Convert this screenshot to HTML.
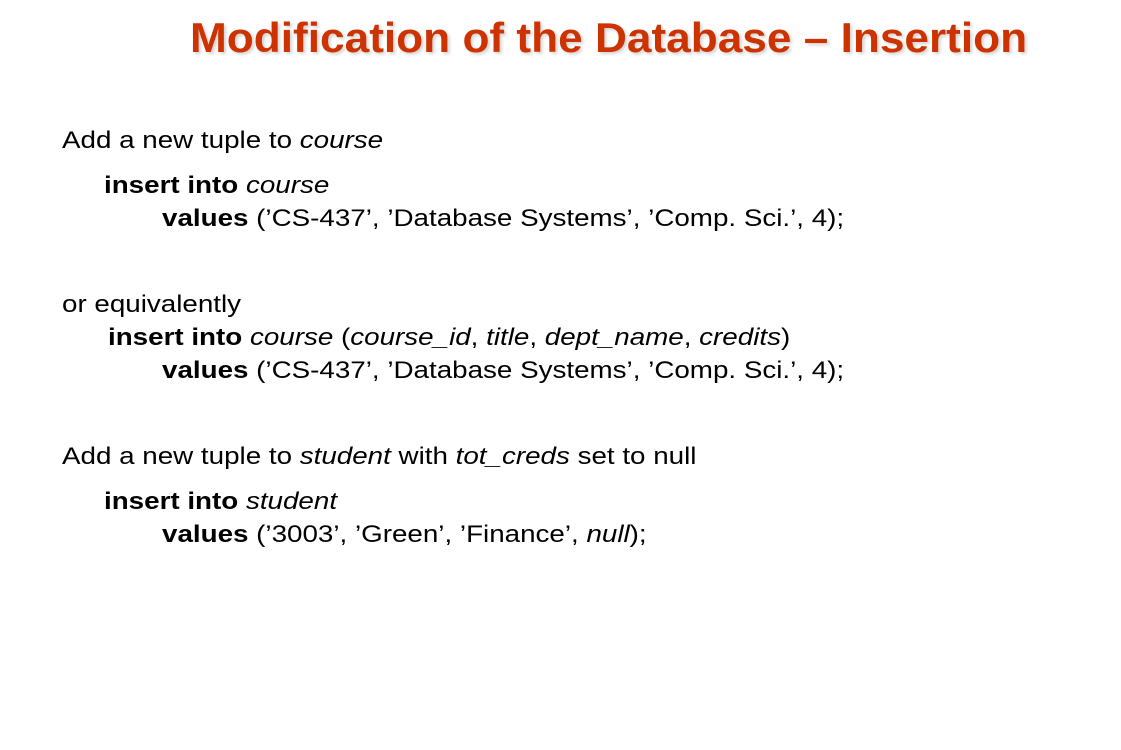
<!DOCTYPE html>
<html><head><meta charset="utf-8"><style>
body{margin:0;width:1121px;height:750px;background:#fff;position:relative;overflow:hidden;font-family:"Liberation Sans",Arial,Helvetica,sans-serif;color:#000}
.t{position:absolute;left:190px;top:14px;font-size:42px;font-weight:bold;color:#cc3300;white-space:nowrap;text-shadow:2px 2px 3px rgba(0,0,0,0.18);transform:scaleX(1.052);transform-origin:0 0}
.l{position:absolute;font-size:24px;white-space:nowrap;line-height:30px;transform:scaleX(1.157);transform-origin:0 0}
</style></head><body>
<div class="t">Modification of the Database – Insertion</div>
<div class="l" style="left:62px;top:126px">Add a new tuple to <i>course</i></div>
<div class="l" style="left:104px;top:171px"><b>insert into</b> <i>course</i></div>
<div class="l" style="left:162px;top:204px"><b>values</b> (’CS-437’, ’Database Systems’, ’Comp. Sci.’, 4);</div>
<div class="l" style="left:62px;top:290px">or equivalently</div>
<div class="l" style="left:108px;top:323px"><b>insert into</b> <i>course</i> (<i>course_id</i>, <i>title</i>, <i>dept_name</i>, <i>credits</i>)</div>
<div class="l" style="left:162px;top:356px"><b>values</b> (’CS-437’, ’Database Systems’, ’Comp. Sci.’, 4);</div>
<div class="l" style="left:62px;top:442px">Add a new tuple to <i>student</i> with <i>tot_creds</i> set to null</div>
<div class="l" style="left:104px;top:487px"><b>insert into</b> <i>student</i></div>
<div class="l" style="left:162px;top:520px"><b>values</b> (’3003’, ’Green’, ’Finance’, <i>null</i>);</div>
</body></html>
